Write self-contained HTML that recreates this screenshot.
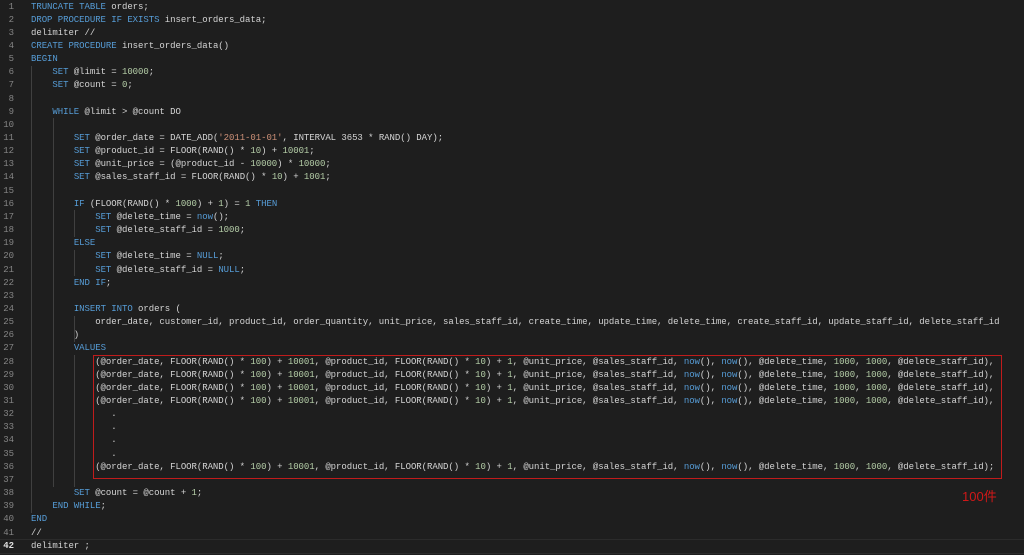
<!DOCTYPE html>
<html><head><meta charset="utf-8"><style>
html,body{margin:0;padding:0;background:#1e1e1e;width:1024px;height:555px;overflow:hidden}
.l{position:absolute;left:0;height:13.15px;line-height:13.15px;font-family:"Liberation Mono",monospace;font-size:9px;letter-spacing:-0.05px;white-space:pre;color:#d4d4d4}
.n{position:absolute;left:0;width:14px;text-align:right;color:#858585}
.c{position:absolute;left:31px}
.k{color:#569cd6}.d{color:#b5cea8}.s{color:#ce9178}
.g{position:absolute;width:1px;background:#404040}
</style></head><body>
<div id="w"></div>
<div class="g" style="left:31px;top:65.75px;height:447px"></div>
<div class="g" style="left:52.6px;top:118.35px;height:368.2px"></div>
<div class="g" style="left:74.2px;top:210.4px;height:26.3px"></div>
<div class="g" style="left:74.2px;top:249.85px;height:26.3px"></div>
<div class="g" style="left:74.2px;top:315.6px;height:26.3px"></div>
<div class="g" style="left:74.2px;top:355.05px;height:131.5px"></div>
<div style="position:absolute;left:93px;top:355px;width:907px;height:122px;border:1px solid #c01c1c"></div>
<div style="position:absolute;left:962px;top:486px;color:#d01818;font-family:'Liberation Sans','Noto Sans CJK JP',sans-serif;font-size:13px">100件</div>
<div style="position:absolute;left:0;top:539px;width:1024px;height:13px;border-top:1px solid #2b2b2b;border-bottom:1px solid #2b2b2b"></div>
<script>
const L=[
'<span class=k>TRUNCATE TABLE</span> orders;',
'<span class=k>DROP PROCEDURE IF EXISTS</span> insert_orders_data;',
'delimiter //',
'<span class=k>CREATE PROCEDURE</span> insert_orders_data()',
'<span class=k>BEGIN</span>',
'    <span class=k>SET</span> @limit = <span class=d>10000</span>;',
'    <span class=k>SET</span> @count = <span class=d>0</span>;',
'',
'    <span class=k>WHILE</span> @limit > @count DO',
'',
'        <span class=k>SET</span> @order_date = DATE_ADD(<span class=s>\'2011-01-01\'</span>, INTERVAL 3653 * RAND() DAY);',
'        <span class=k>SET</span> @product_id = FLOOR(RAND() * <span class=d>10</span>) + <span class=d>10001</span>;',
'        <span class=k>SET</span> @unit_price = (@product_id - <span class=d>10000</span>) * <span class=d>10000</span>;',
'        <span class=k>SET</span> @sales_staff_id = FLOOR(RAND() * <span class=d>10</span>) + <span class=d>1001</span>;',
'',
'        <span class=k>IF</span> (FLOOR(RAND() * <span class=d>1000</span>) + <span class=d>1</span>) = <span class=d>1</span> <span class=k>THEN</span>',
'            <span class=k>SET</span> @delete_time = <span class=k>now</span>();',
'            <span class=k>SET</span> @delete_staff_id = <span class=d>1000</span>;',
'        <span class=k>ELSE</span>',
'            <span class=k>SET</span> @delete_time = <span class=k>NULL</span>;',
'            <span class=k>SET</span> @delete_staff_id = <span class=k>NULL</span>;',
'        <span class=k>END IF</span>;',
'',
'        <span class=k>INSERT INTO</span> orders (',
'            order_date, customer_id, product_id, order_quantity, unit_price, sales_staff_id, create_time, update_time, delete_time, create_staff_id, update_staff_id, delete_staff_id',
'        )',
'        <span class=k>VALUES</span>'];
const R='            (@order_date, FLOOR(RAND() * <span class=d>100</span>) + <span class=d>10001</span>, @product_id, FLOOR(RAND() * <span class=d>10</span>) + <span class=d>1</span>, @unit_price, @sales_staff_id, <span class=k>now</span>(), <span class=k>now</span>(), @delete_time, <span class=d>1000</span>, <span class=d>1000</span>, @delete_staff_id)';
for(let i=0;i<4;i++)L.push(R+',');
for(let i=0;i<4;i++)L.push('               .');
L.push(R+';');
L.push('','        <span class=k>SET</span> @count = @count + <span class=d>1</span>;','    <span class=k>END WHILE</span>;','<span class=k>END</span>','//','delimiter ;');
let h='';
L.forEach((t,i)=>{h+='<div class=l style="top:'+(0.5+i*13.15)+'px;width:1024px"><span class=n'+(i==41?' style="color:#e0e0e0;font-weight:bold"':'')+'>'+(i+1)+'</span><span class=c>'+t+'</span></div>';});
document.getElementById('w').innerHTML=h;
</script>
</body></html>
